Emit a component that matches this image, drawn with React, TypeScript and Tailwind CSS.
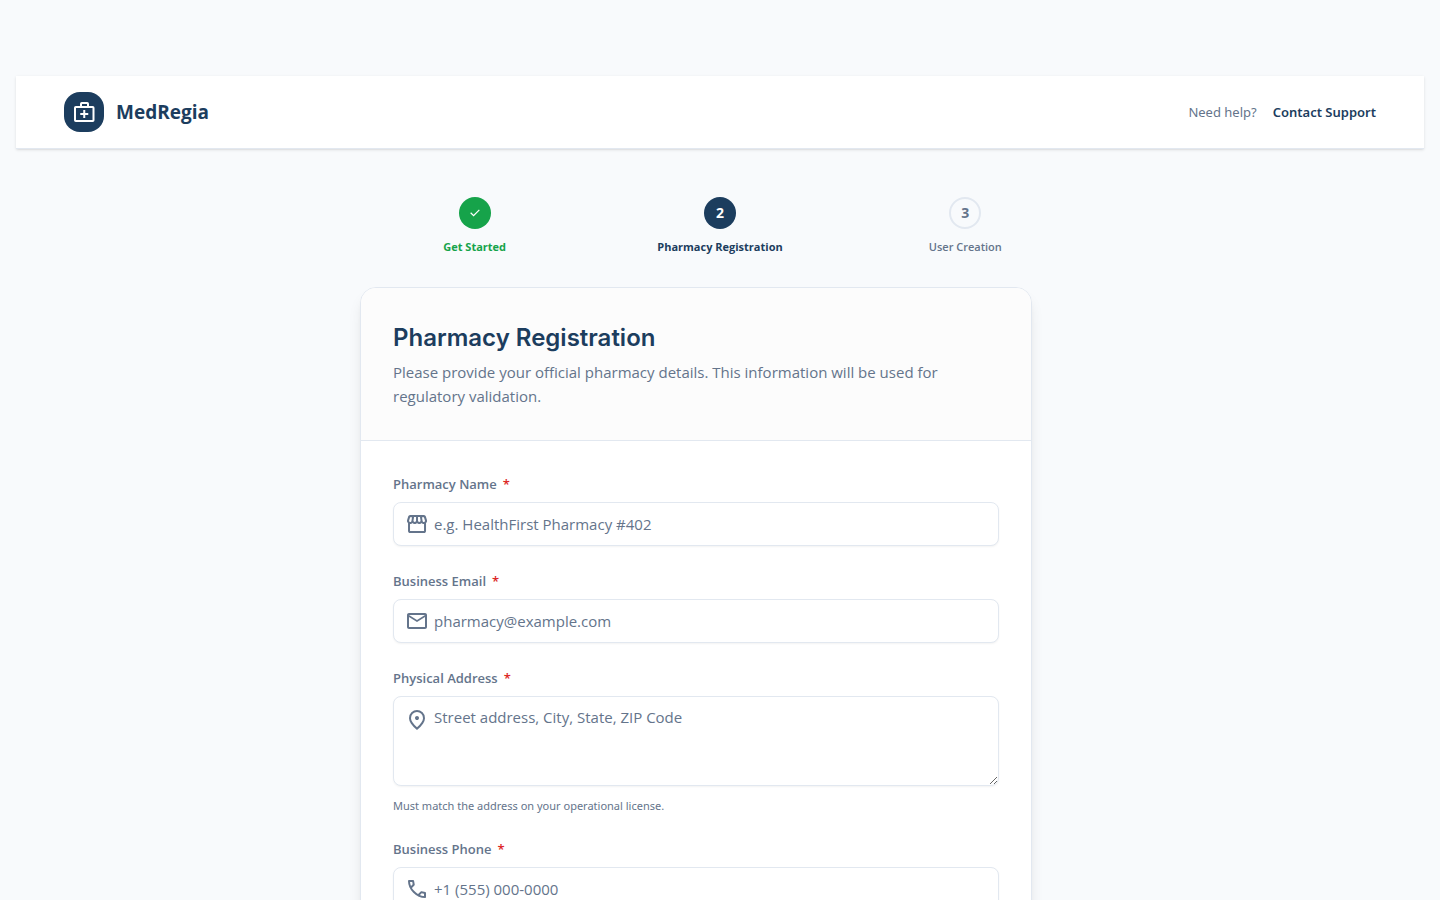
import type { ReactNode } from "react";
import { MdMailOutline } from "react-icons/md";

const paths = {
  check: "M382-240 154-468l57-57 171 171 367-367 57 57-424 424Z",
  storefront:
    "M841-518v318q0 33-23.5 56.5T761-120H201q-33 0-56.5-23.5T121-200v-318q-23-21-35.5-54t-.5-72l42-136q8-26 28.5-43t47.5-17h556q27 0 47 16.5t29 43.5l42 136q12 39-.5 71T841-518Zm-272-42q27 0 41-18.5t11-41.5l-22-140h-78v148q0 21 14 36.5t34 15.5Zm-180 0q23 0 37.5-15.5T441-612v-148h-78l-22 140q-4 24 10.5 42t37.5 18Zm-178 0q18 0 31.5-13t16.5-33l22-140h-78l-40 134q-6 20 6.5 36t41.5 16Zm540 0q29 0 42-16t6-36l-42-134h-76l22 140q3 20 16.5 33t31.5 13ZM201-200h560v-282q-5 2-6.5 2H751q-27 0-47.5-9T663-518q-18 18-41 28t-49 10q-27 0-50.5-10T481-518q-17 18-39.5 28T393-480q-29 0-52.5-10T299-518q-21 21-41.5 29.5T211-480h-4.5q-2.5 0-5.5-2v282Z",
  pin: "M480-480q33 0 56.5-23.5T560-560q0-33-23.5-56.5T480-640q-33 0-56.5 23.5T400-560q0 33 23.5 56.5T480-480Zm0 294q122-112 181-203.5T720-552q0-109-69.5-178.5T480-800q-101 0-170.5 69.5T240-552q0 71 59 162.5T480-186Zm0 106Q319-217 239.5-334.5T160-552q0-150 96.5-239T480-880q127 0 223.5 89T800-552q0 100-79.5 217.5T480-80Z",
  phone:
    "M798-120q-125 0-247-54.5T329-329Q229-429 174.5-551T120-798q0-18 12-30t30-12h162q14 0 25 9.5t13 22.5l26 140q2 16-1 27t-11 19l-97 98q20 37 47.5 71.5T387-386q31 31 65 57.5t72 48.5l94-94q9-9 23.5-13.5T670-390l138 28q14 4 23 14.5t9 23.5v162q0 18-12 30t-30 12ZM241-600l66-66-17-94h-89q5 41 14 81t26 79Zm358 358q39 17 79.5 27t81.5 13v-88l-94-19-67 67Z",
};

function Icon({ name }: { name: keyof typeof paths }) {
  return (
    <svg viewBox="0 -960 960 960" width="1em" height="1em" fill="currentColor" aria-hidden="true">
      <path d={paths[name]} />
    </svg>
  );
}

function MedicalBag() {
  return (
    <svg viewBox="0 0 24 24" width="24" height="24" fill="none" stroke="currentColor" strokeWidth="2" aria-hidden="true">
      <rect x="3" y="7" width="18.5" height="14" rx="0.8" />
      <path d="M9 7V3.8Q9 3 9.8 3h5.4q.8 0 .8.8V7M12.25 10v8M8.25 14h8" />
    </svg>
  );
}

const control =
  "block w-full rounded-lg border border-[#e2e8f0] bg-white pr-3 pl-10 font-['Open_Sans','Noto_Sans',sans-serif] text-[15px] leading-6 text-[#1c3d5e] shadow-xs outline-none placeholder:text-[#64748b] focus:border-[#1c3d5e]";

type FieldProps = {
  id: string;
  label: string;
  icon: ReactNode;
  multiline?: boolean;
  hint?: string;
  children: ReactNode;
};

function Field({ id, label, icon, multiline, hint, children }: FieldProps) {
  return (
    <div>
      <label htmlFor={id} className="mb-1.5 flex gap-1.5 text-[13px] leading-[23px] font-semibold text-[#64748b]">
        {label}
        <span className="text-[#dc2626]">*</span>
      </label>
      <div className="relative">
        {children}
        <span
          className={`pointer-events-none absolute left-3 text-2xl text-[#64748b] ${multiline ? "top-3" : "top-2.5"}`}
        >
          {icon}
        </span>
      </div>
      {hint && (
        <p className="mt-3 font-['Noto_Sans',sans-serif] text-[11px] leading-4 text-[#64748b]">{hint}</p>
      )}
    </div>
  );
}

type StepProps = { label: string; state: "done" | "current" | "next"; children: ReactNode };

const circleStyle = {
  done: "bg-[#16a34a] text-white",
  current: "bg-[#1c3d5e] text-white",
  next: "border-2 border-[#e2e8f0] text-[#64748b]",
};

const labelStyle = {
  done: "font-bold text-[#16a34a]",
  current: "font-bold text-[#1c3d5e]",
  next: "font-semibold text-[#64748b]",
};

function Step({ label, state, children }: StepProps) {
  return (
    <li className="flex flex-col items-center gap-2">
      <span className={`flex size-8 items-center justify-center rounded-full text-sm font-bold ${circleStyle[state]}`}>
        {children}
      </span>
      <span className={`text-[11px] leading-5 ${labelStyle[state]}`}>{label}</span>
    </li>
  );
}

export default function App() {
  return (
    <div className="min-h-screen bg-[#f8fafc] px-4 pt-19 font-['Open_Sans','Noto_Sans',sans-serif] text-[#1c3d5e]">
      <header className="flex items-center justify-between border-b border-[#e2e8f0] bg-white px-12 py-4 shadow-sm">
        <div className="flex items-center gap-3">
          <span className="flex size-10 items-center justify-center rounded-2xl bg-[#1c3d5e] text-white">
            <MedicalBag />
          </span>
          <span className="text-[19px] leading-7 font-bold">MedRegia</span>
        </div>
        <div className="flex items-center gap-4 font-['Noto_Sans',sans-serif] text-[13px] leading-5">
          <span className="text-[#64748b]">Need help?</span>
          <a href="#support" className="font-semibold">
            Contact Support
          </a>
        </div>
      </header>

      <main className="mx-auto max-w-3xl pt-12 pb-12">
        <ol className="grid grid-cols-3 px-4">
          <Step label="Get Started" state="done">
            <Icon name="check" />
          </Step>
          <Step label="Pharmacy Registration" state="current">
            2
          </Step>
          <Step label="User Creation" state="next">
            3
          </Step>
        </ol>

        <section className="mx-6 mt-[30px] max-w-2xl overflow-hidden rounded-2xl border border-[#e2e8f0] bg-white shadow-lg">
          <div className="border-b border-[#e2e8f0] bg-[#fcfcfc] p-8">
            <h1 className="mb-1 font-['Inter',sans-serif] text-2xl leading-9 font-semibold">Pharmacy Registration</h1>
            <p className="text-[15px] leading-6 text-[#64748b]">
              Please provide your official pharmacy details. This information will be used for regulatory validation.
            </p>
          </div>
          <form className="flex flex-col gap-6 p-8">
            <Field id="name" label="Pharmacy Name" icon={<Icon name="storefront" />}>
              <input id="name" type="text" placeholder="e.g. HealthFirst Pharmacy #402" className={`${control} h-11`} />
            </Field>
            <Field id="email" label="Business Email" icon={<MdMailOutline />}>
              <input id="email" type="email" placeholder="pharmacy@example.com" className={`${control} h-11`} />
            </Field>
            <Field
              id="address"
              label="Physical Address"
              icon={<Icon name="pin" />}
              multiline
              hint="Must match the address on your operational license."
            >
              <textarea
                id="address"
                placeholder="Street address, City, State, ZIP Code"
                className={`${control} h-[90px] resize-y py-2`}
              />
            </Field>
            <Field id="phone" label="Business Phone" icon={<Icon name="phone" />}>
              <input id="phone" type="tel" placeholder="+1 (555) 000-0000" className={`${control} h-11`} />
            </Field>
          </form>
        </section>
      </main>
    </div>
  );
}
